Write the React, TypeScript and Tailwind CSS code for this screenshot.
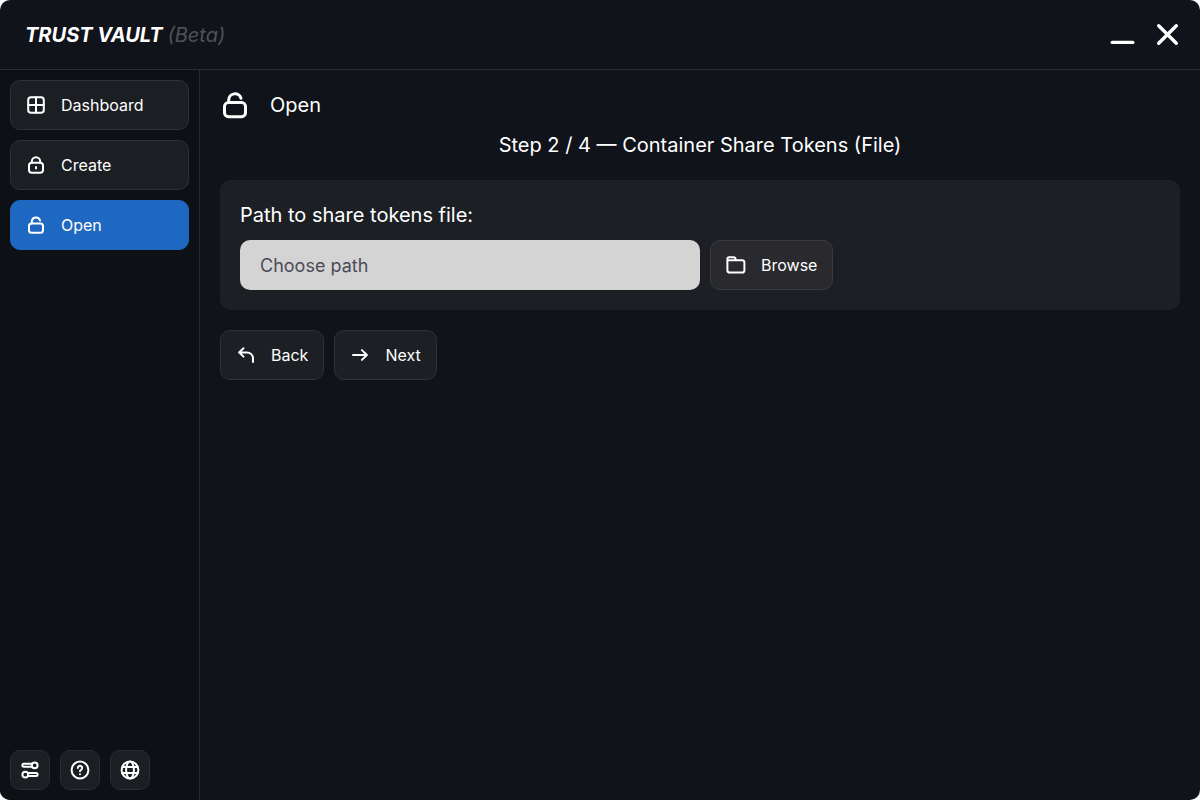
import React, { useState } from 'react';

type IconProps = { className?: string; children?: React.ReactNode };

const Icon = ({ className = 'size-5', children }: IconProps) => (
  <svg
    viewBox="0 0 20 20"
    fill="none"
    stroke="currentColor"
    strokeWidth="2"
    strokeLinecap="round"
    strokeLinejoin="round"
    aria-hidden="true"
    className={`shrink-0 ${className}`}
  >
    {children}
  </svg>
);

const DashboardIcon = () => (
  <Icon>
    <rect x="2.2" y="2.2" width="15.6" height="15.6" rx="2.8" />
    <path d="M10 2.2v15.6M2.2 10h15.6" />
  </Icon>
);

const LockIcon = () => (
  <Icon>
    <rect x="3" y="7.8" width="14" height="10" rx="2.8" />
    <path d="M5.8 7.8V6.4a4.2 4.2 0 0 1 8.4 0v1.4M10 12v1.6" />
  </Icon>
);

const OpenLockIcon = ({ className }: IconProps) => (
  <Icon className={className}>
    <rect x="3" y="8.4" width="14" height="9.4" rx="2.6" />
    <path d="M5.8 8.4V6.5a4.2 4.2 0 0 1 8.2-1" />
  </Icon>
);

const FolderIcon = () => (
  <Icon>
    <path d="M1.4 6V3.7a1.4 1.4 0 0 1 1.4-1.4h5.1a1.6 1.6 0 0 1 1.6 1.6v1.3H16a2.4 2.4 0 0 1 2.4 2.4v7.6a2.4 2.4 0 0 1-2.4 2.4H3.8a2.4 2.4 0 0 1-2.4-2.4V5.2h8.1" />
  </Icon>
);

const BackIcon = () => (
  <Icon>
    <path d="M7.5 3.2 3.1 7.4l4.4 4.2M3.1 7.4H11a6 6 0 0 1 6 6v3.7" />
  </Icon>
);

const NextIcon = () => (
  <Icon>
    <path d="M3 10h13.8M11.9 5.1l5 4.9-5 4.9" />
  </Icon>
);

const SettingsIcon = () => (
  <Icon>
    <circle cx="14.7" cy="5.3" r="2.9" />
    <path d="M11.8 3.8H3.9a1.5 1.5 0 0 0 0 3h7.9" />
    <circle cx="5.3" cy="14.6" r="2.9" />
    <path d="M8.2 13.1h7.9a1.5 1.5 0 0 1 0 3H8.2" />
  </Icon>
);

const HelpIcon = () => (
  <Icon>
    <circle cx="10" cy="10" r="8.4" />
    <path d="M7.8 8a2.2 2.2 0 1 1 3.4 1.8c-.8.5-1.2.8-1.2 1.4M10 14.2v.1" />
  </Icon>
);

const GlobeIcon = () => (
  <Icon>
    <circle cx="10" cy="10" r="8.4" />
    <ellipse cx="10" cy="10" rx="3.9" ry="8.4" />
    <path d="M2.4 7.1h15.2M2.4 12.9h15.2" />
  </Icon>
);

const buttonStyle =
  'flex h-[50px] items-center gap-[15px] rounded-[10px] border px-[15px] text-base';

const pages = [
  { name: 'Dashboard', icon: <DashboardIcon /> },
  { name: 'Create', icon: <LockIcon /> },
  { name: 'Open', icon: <OpenLockIcon /> },
];

const tools = [
  { name: 'Settings', icon: <SettingsIcon /> },
  { name: 'Help', icon: <HelpIcon /> },
  { name: 'Language', icon: <GlobeIcon /> },
];

const Header = () => (
  <header className="flex h-[70px] items-center justify-between border-b border-[#2a2c31] pr-5 pl-[25px]">
    <h1 className="text-xl font-bold italic">
      TRUST VAULT <span className="font-normal text-[#515256]">(Beta)</span>
    </h1>
    <div className="flex items-center gap-5">
      <button type="button" aria-label="Minimize">
        <svg viewBox="0 0 25 25" className="size-[25px]" stroke="currentColor" strokeWidth="3.4" strokeLinecap="round">
          <path d="M2.2 20.4h20.6" />
        </svg>
      </button>
      <button type="button" aria-label="Close">
        <svg viewBox="0 0 25 25" className="size-[25px]" stroke="currentColor" strokeWidth="3.4" strokeLinecap="round">
          <path d="M3.7 3.7l17.6 17.6M21.3 3.7L3.7 21.3" />
        </svg>
      </button>
    </div>
  </header>
);

const Sidebar = () => {
  const [active, setActive] = useState('Open');

  return (
    <aside className="flex w-[200px] shrink-0 flex-col justify-between border-r border-[#25272b] bg-[#0d1014] p-2.5">
      <nav className="flex flex-col gap-2.5">
        {pages.map((page) => (
          <button
            key={page.name}
            type="button"
            onClick={() => setActive(page.name)}
            className={`${buttonStyle} ${
              active === page.name ? 'border-[#1f68c1] bg-[#1f68c1]' : 'border-[#2d3034] bg-[#1b1e22]'
            }`}
          >
            {page.icon}
            {page.name}
          </button>
        ))}
      </nav>
      <div className="flex gap-2.5">
        {tools.map((tool) => (
          <button
            key={tool.name}
            type="button"
            aria-label={tool.name}
            className="flex size-10 items-center justify-center rounded-[10px] border border-[#2a2d31] bg-[#1b1e22]"
          >
            {tool.icon}
          </button>
        ))}
      </div>
    </aside>
  );
};

const OpenPage = () => {
  const [path, setPath] = useState('');

  return (
    <main className="flex min-w-0 flex-1 flex-col px-5 pt-[15px]">
      <div className="flex h-10 items-center gap-5">
        <OpenLockIcon className="size-[30px]" />
        <h2 className="text-xl">Open</h2>
      </div>
      <p className="text-center text-xl leading-10">Step 2 / 4 — Container Share Tokens (File)</p>

      {/* Share tokens file */}
      <section className="mt-[15px] rounded-[10px] bg-[#1c1f24] p-5">
        <label htmlFor="path" className="block text-xl leading-[30px]">
          Path to share tokens file:
        </label>
        <div className="mt-2.5 flex gap-2.5">
          <input
            id="path"
            type="text"
            placeholder="Choose path"
            value={path}
            onChange={(e) => setPath(e.target.value)}
            className="h-[50px] w-[460px] rounded-[10px] bg-[#d4d4d4] px-5 text-lg text-[#1c1f24] outline-none placeholder:text-[#4b4b57]"
          />
          <button type="button" className={`${buttonStyle} border-[#3a3b40] bg-[#29292e]`}>
            <FolderIcon />
            Browse
          </button>
        </div>
      </section>

      <div className="mt-5 flex gap-2.5">
        <button type="button" className={`${buttonStyle} border-[#2f3237] bg-[#1c1f23]`}>
          <BackIcon />
          Back
        </button>
        <button type="button" className={`${buttonStyle} border-[#2f3237] bg-[#1c1f23]`}>
          <NextIcon />
          Next
        </button>
      </div>
    </main>
  );
};

const App = () => (
  <div className="min-h-screen bg-white">
    <div className="flex min-h-screen flex-col overflow-hidden rounded-[10px] bg-[#10131a] font-['Inter',sans-serif] text-white">
      <Header />
      <div className="flex flex-1">
        <Sidebar />
        <OpenPage />
      </div>
    </div>
  </div>
);

export default App;
